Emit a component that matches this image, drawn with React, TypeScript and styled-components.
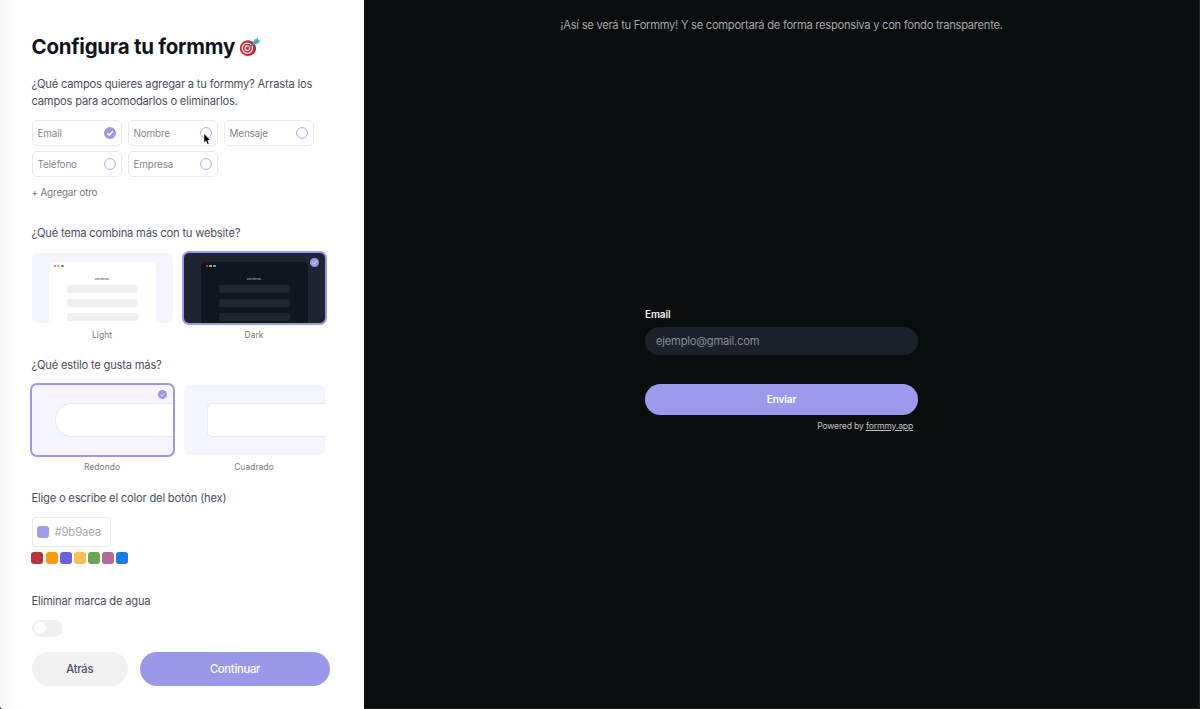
import React from "react";
import styled, { createGlobalStyle } from "styled-components";

const Global = createGlobalStyle`
  * { box-sizing: border-box; }
  body { margin: 0; background: #0a0d0e; font-family: Inter, "Liberation Sans", sans-serif; overflow: hidden; }
`;

const Page = styled.div`
  display: flex;
  width: 1200px;
  height: 709px;
  background: #0a0d0e;
`;

const Panel = styled.aside`
  width: 364px;
  flex: none;
  height: 709px;
  padding: 33px 34px 0 31.5px;
  background: linear-gradient(90deg, #f5f5f5 0, #fbfbfb 8px, #fefefe 18px, #fefefe 100%);
  border-bottom-left-radius: 3px;
`;

const Title = styled.h1`
  display: flex;
  align-items: center;
  gap: 4px;
  margin: 0 0 16px;
  height: 27px;
  font-size: 20.5px;
  font-weight: 700;
  line-height: 27px;
  letter-spacing: -0.25px;
  color: #12141d;
  white-space: nowrap;
`;

const Question = styled.p<{ $top?: number }>`
  margin: ${(p) => p.$top ?? 0}px 0 0;
  font-size: 11.2px;
  line-height: 17px;
  letter-spacing: -0.21px;
  color: #4b5160;
  white-space: nowrap;
`;

const Fields = styled.div`
  display: grid;
  grid-template-columns: repeat(3, 90px);
  grid-auto-rows: 26px;
  gap: 5px 6px;
  margin: 10px 0 0;
`;

const Field = styled.div`
  display: flex;
  align-items: center;
  justify-content: space-between;
  padding: 0 4.5px 0 5px;
  border: 1px solid #ebebed;
  border-radius: 5px;
  background: #fff;
  font-size: 9.9px;
  letter-spacing: -0.15px;
  color: #83868f;
`;

const AddField = styled.div`
  margin-top: 8px;
  font-size: 9.9px;
  line-height: 15px;
  letter-spacing: -0.17px;
  color: #757984;
`;

const Options = styled.div<{ $top: number }>`
  display: flex;
  gap: 11px;
  margin-top: ${(p) => p.$top}px;
`;

const Option = styled.div`
  width: 141px;
`;

const Thumb = styled.div<{ $dark?: boolean; $selected?: boolean }>`
  position: relative;
  display: flex;
  justify-content: center;
  height: 70px;
  overflow: hidden;
  border-radius: 5px;
  background: ${(p) => (p.$dark ? "#202531" : "#f4f5fe")};
  box-shadow: ${(p) => (p.$selected ? "0 0 0 2px #9b98ea" : "none")};
`;

const ThumbCheck = styled.div`
  position: absolute;
  top: 5px;
  right: 6px;
  display: flex;
`;

const Caption = styled.div`
  margin-top: 5px;
  text-align: center;
  font-size: 8.4px;
  line-height: 14px;
  letter-spacing: 0.1px;
  color: #757984;
`;

const MiniWindow = styled.div<{ $dark?: boolean }>`
  width: 107px;
  height: 61px;
  margin-top: 9px;
  padding: 3px 18px 0;
  border-radius: 5px 5px 0 0;
  background: ${(p) => (p.$dark ? "#101620" : "#fff")};
`;

const Dots = styled.div`
  display: flex;
  gap: 1.6px;
  margin-left: -13px;
  height: 3px;
`;

const Dot = styled.i<{ $color: string }>`
  width: 2.4px;
  height: 2.4px;
  border-radius: 50%;
  background: ${(p) => p.$color};
`;

const MiniTitle = styled.div<{ $dark?: boolean }>`
  margin: 9px 0 4px;
  height: 4px;
  text-align: center;
  font-size: 2.6px;
  line-height: 4px;
  font-weight: 600;
  color: ${(p) => (p.$dark ? "#9a9ea8" : "#5c606b")};
`;

const MiniBar = styled.div<{ $dark?: boolean }>`
  height: 8px;
  margin-bottom: 6px;
  border-radius: 2px;
  background: ${(p) => (p.$dark ? "#202530" : "#f0f0f1")};
`;

const Shape = styled.div<{ $round?: boolean }>`
  width: 118px;
  height: 34px;
  margin: 18px 0 0 auto;
  border: 1px solid #e9e9ee;
  border-right: 0;
  border-radius: ${(p) => (p.$round ? "17px 0 0 17px" : "5px 0 0 5px")};
  background: #fff;
`;

const HexInput = styled.div`
  display: flex;
  align-items: center;
  gap: 6px;
  width: 79px;
  height: 30px;
  margin-top: 10px;
  padding: 0 4px;
  border: 1px solid #ececee;
  border-radius: 3px;
  background: #fff;
  font-size: 11.3px;
  letter-spacing: -0.15px;
  color: #a5a8ae;
`;

const Swatches = styled.div`
  display: flex;
  gap: 2.1px;
  margin: 5px 0 0 -0.1px;
`;

const Swatch = styled.span<{ $color: string }>`
  flex: none;
  width: 12px;
  height: 12px;
  border-radius: 3px;
  background: ${(p) => p.$color};
`;

const Toggle = styled.div`
  width: 31px;
  height: 17px;
  margin-top: 10px;
  padding: 2.5px;
  border-radius: 9px;
  background: #f0f0f0;
`;

const Knob = styled.div`
  width: 12px;
  height: 12px;
  border-radius: 50%;
  background: #fff;
`;

const Actions = styled.div`
  display: flex;
  gap: 12px;
  margin-top: 15.5px;
`;

const Button = styled.button<{ $primary?: boolean }>`
  width: ${(p) => (p.$primary ? 190 : 96.5)}px;
  height: 33.5px;
  flex: none;
  padding: 0;
  border: 0;
  border-radius: 17px;
  background: ${(p) => (p.$primary ? "#9b98ea" : "#f1f1f1")};
  color: ${(p) => (p.$primary ? "#fff" : "#4b5160")};
  font: 500 11.2px Inter, sans-serif;
  letter-spacing: -0.25px;
`;

const Preview = styled.main`
  display: flex;
  flex: 1;
  flex-direction: column;
  align-items: center;
  padding-top: 17px;
  border-right: 1px solid #252526;
  border-bottom: 1px solid #252526;
  border-bottom-right-radius: 4px;
`;

const Notice = styled.p`
  margin: 0;
  font-size: 11.2px;
  line-height: 17px;
  letter-spacing: -0.28px;
  color: #a4a6ab;
  white-space: nowrap;
`;

const Form = styled.form`
  display: flex;
  flex-direction: column;
  width: 273px;
  margin-top: 273px;
`;

const Label = styled.label`
  font-size: 10px;
  font-weight: 600;
  line-height: 14px;
  letter-spacing: -0.1px;
  color: #f2f2f4;
`;

const EmailBox = styled.div`
  height: 28px;
  margin-top: 6px;
  padding-left: 11px;
  border-radius: 14px;
  background: #1c2028;
  font-size: 11.2px;
  line-height: 28px;
  letter-spacing: -0.23px;
  color: #868a93;
`;

const Submit = styled.button`
  height: 31px;
  margin-top: 29px;
  padding: 0 0 1px;
  border: 0;
  border-radius: 16px;
  background: #9d9aed;
  color: #fff;
  font: 600 10px Inter, sans-serif;
  letter-spacing: -0.1px;
`;

const Powered = styled.div`
  margin: 5px 5px 0 0;
  text-align: right;
  font-size: 8.6px;
  line-height: 13px;
  letter-spacing: -0.16px;
  color: #c3c4c8;
  & span { text-decoration: underline; }
`;

const Cursor = styled.svg`
  position: absolute;
  left: 203px;
  top: 132px;
`;

const Check = ({ size }: { size: number }) => (
  <svg width={size} height={size} viewBox="0 0 12 12" fill="none">
    <circle cx="6" cy="6" r="6" fill="#9b98ea" />
    <path d="M3.2 6.2 5.2 8.1 8.9 4.2" stroke="#fff" strokeWidth={size < 12 ? 1 : 1.5} />
  </svg>
);

const Ring = () => (
  <svg width="12" height="12" viewBox="0 0 12 12" fill="none">
    <circle cx="6" cy="6" r="5.4" stroke="#aaa7ee" strokeWidth="1" />
  </svg>
);

const Dart = () => (
  <svg width="22" height="20" viewBox="0 0 22 20" fill="none">
    <circle cx="9.4" cy="11.2" r="7.6" fill="#8f1c26" />
    <circle cx="8.4" cy="11.2" r="7.6" fill="#cf2934" />
    <circle cx="8.4" cy="11.2" r="5.1" stroke="#f6e9e9" strokeWidth="1.3" />
    <circle cx="8.4" cy="11.2" r="2.3" stroke="#f6e9e9" strokeWidth="1.2" />
    <path d="M8.6 11 16.4 5.4" stroke="#3d8f96" strokeWidth="1.4" />
    <path d="m14 6.6.6-3.6L19 .8l.2 2.4 2.6.5-3.4 3.4-4.4.2Z" fill="#54bcc2" />
    <path d="m14.8 6.2 4.4-3" stroke="#2d878e" strokeWidth=".8" />
  </svg>
);

const ThemeThumb = ({ dark }: { dark?: boolean }) => (
  <Thumb $dark={dark} $selected={dark}>
    <MiniWindow $dark={dark}>
      <Dots>
        <Dot $color="#e5484d" />
        <Dot $color="#f2b32c" />
        <Dot $color={dark ? "#5fc79b" : "#3bab58"} />
      </Dots>
      <MiniTitle $dark={dark}>Escríbenos</MiniTitle>
      <MiniBar $dark={dark} />
      <MiniBar $dark={dark} />
      <MiniBar $dark={dark} />
    </MiniWindow>
    {dark && <ThumbCheck><Check size={9} /></ThumbCheck>}
  </Thumb>
);

const fields = ["Email", "Nombre", "Mensaje", "Teléfono", "Empresa"];
const colors = ["#bb333a", "#fb9c0c", "#6f5ee0", "#fac05a", "#69a851", "#b06b98", "#1a7be8"];

export default function App() {
  return (
    <Page>
      <Global />
      <Panel>
        <Title>Configura tu formmy <Dart /></Title>
        <Question>¿Qué campos quieres agregar a tu formmy? Arrasta los<br />campos para acomodarlos o eliminarlos.</Question>
        <Fields>
          {fields.map((name, i) => (
            <Field key={name}>{name}{i === 0 ? <Check size={12} /> : <Ring />}</Field>
          ))}
        </Fields>
        <AddField>+ Agregar otro</AddField>
        <Question $top={25.4}>¿Qué tema combina más con tu website?</Question>
        <Options $top={10.6}>
          <Option><ThemeThumb /><Caption>Light</Caption></Option>
          <Option><ThemeThumb dark /><Caption>Dark</Caption></Option>
        </Options>
        <Question $top={15.5}>¿Qué estilo te gusta más?</Question>
        <Options $top={10.5}>
          <Option>
            <Thumb $selected><Shape $round /><ThumbCheck><Check size={9} /></ThumbCheck></Thumb>
            <Caption>Redondo</Caption>
          </Option>
          <Option><Thumb><Shape /></Thumb><Caption>Cuadrado</Caption></Option>
        </Options>
        <Question $top={16}>Elige o escribe el color del botón (hex)</Question>
        <HexInput><Swatch $color="#9f9cec" />#9b9aea</HexInput>
        <Swatches>{colors.map((c) => <Swatch key={c} $color={c} />)}</Swatches>
        <Question $top={29}>Eliminar marca de agua</Question>
        <Toggle><Knob /></Toggle>
        <Actions>
          <Button>Atrás</Button>
          <Button $primary>Continuar</Button>
        </Actions>
      </Panel>
      <Preview>
        <Notice>¡Así se verá tu Formmy! Y se comportará de forma responsiva y con fondo transparente.</Notice>
        <Form>
          <Label>Email</Label>
          <EmailBox>ejemplo@gmail.com</EmailBox>
          <Submit type="button">Enviar</Submit>
          <Powered>Powered by <span>formmy.app</span></Powered>
        </Form>
      </Preview>
      <Cursor width="8" height="14" viewBox="0 0 8 13">
        <path d="M1 1v9.2l2-1.8 1.4 3.4 1.7-.7-1.4-3.3h2.8Z" fill="#000" stroke="#fff" strokeWidth=".5" />
      </Cursor>
    </Page>
  );
}
